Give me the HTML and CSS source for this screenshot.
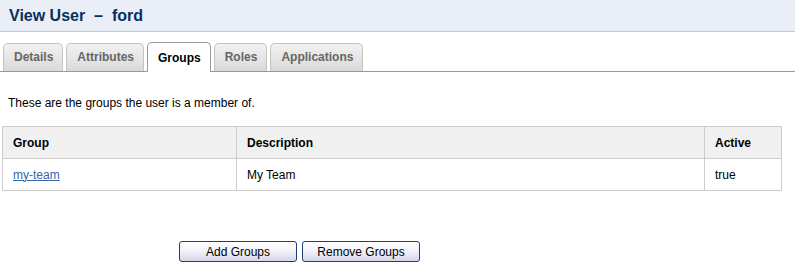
FILE: index.html
```html
<!DOCTYPE html>
<html>
<head>
    <title>View User - ford</title>
    <link rel="stylesheet" href="styles.css">
</head>
<body>
    <div class="page-header">
        <h1>View User &nbsp;&ndash;&nbsp; ford</h1>
    </div>

    <div class="tabs">
        <a class="tab" href="#">Details</a>
        <a class="tab" href="#">Attributes</a>
        <a class="tab active" href="#">Groups</a>
        <a class="tab" href="#">Roles</a>
        <a class="tab" href="#">Applications</a>
    </div>

    <div class="content">
        <p class="intro">These are the groups the user is a member of.</p>

        <table class="groups">
            <thead>
                <tr>
                    <th class="col-group">Group</th>
                    <th class="col-desc">Description</th>
                    <th>Active</th>
                </tr>
            </thead>
            <tbody>
                <tr>
                    <td><a href="#">my-team</a></td>
                    <td>My Team</td>
                    <td>true</td>
                </tr>
            </tbody>
        </table>

        <div class="actions">
            <button>Add Groups</button>
            <button>Remove Groups</button>
        </div>
    </div>
</body>
</html>
```

FILE: styles.css
```css
body {
    font-family: "Liberation Sans", Arial, sans-serif;
    font-size: 12px;
    color: #000;
    margin: 0;
    background: white;
}
.page-header {
    background: #e9eef7;
    border-bottom: 1px solid #b9cbe3;
    height: 31px;
}
h1 {
    margin: 0;
    padding: 6px 0 0 9px;
    font-size: 16px;
    line-height: 20px;
    color: #0b2f5b;
    font-weight: bold;
}
.tabs {
    display: flex;
    align-items: flex-end;
    margin-top: 10px;
    padding-left: 3px;
    border-bottom: 1px solid #999;
    height: 29px;
}
.tab {
    display: block;
    height: 27px;
    line-height: 27px;
    padding: 0 9px 0 10px;
    margin-right: 3px;
    border: 1px solid #c4c4c4;
    border-bottom: none;
    border-radius: 5px 5px 0 0;
    background: linear-gradient(#f2f2f2, #d9d9d9);
    color: #666;
    font-weight: bold;
    text-decoration: none;
}
.tab.active {
    height: 29px;
    line-height: 30px;
    margin-bottom: -1px;
    background: white;
    border-color: #999;
    color: #000;
}
.content {
    padding: 0 2px;
}
.intro {
    margin: 23px 0 0 6px;
    line-height: 16px;
}
table.groups {
    width: 780px;
    border-collapse: collapse;
    margin-top: 15px;
}
.groups th, .groups td {
    border: 1px solid #ccc;
    padding: 0 10px;
    height: 31px;
    text-align: left;
}
.groups th {
    background: #f0f0f0;
    font-weight: bold;
}
.col-group {
    width: 213px;
}
.col-desc {
    width: 447px;
}
.groups a {
    color: #3366aa;
}
.actions {
    display: flex;
    gap: 5px;
    margin-top: 50px;
    padding-left: 177px;
}
.actions button {
    width: 118px;
    height: 21px;
    font-family: "Liberation Sans", Arial, sans-serif;
    font-size: 12px;
    color: #000;
    border: 1px solid #1f3f6e;
    border-radius: 3px;
    background: linear-gradient(#ffffff, #f2f3fa 45%, #d4d7ea);
    padding: 0;
}
```
